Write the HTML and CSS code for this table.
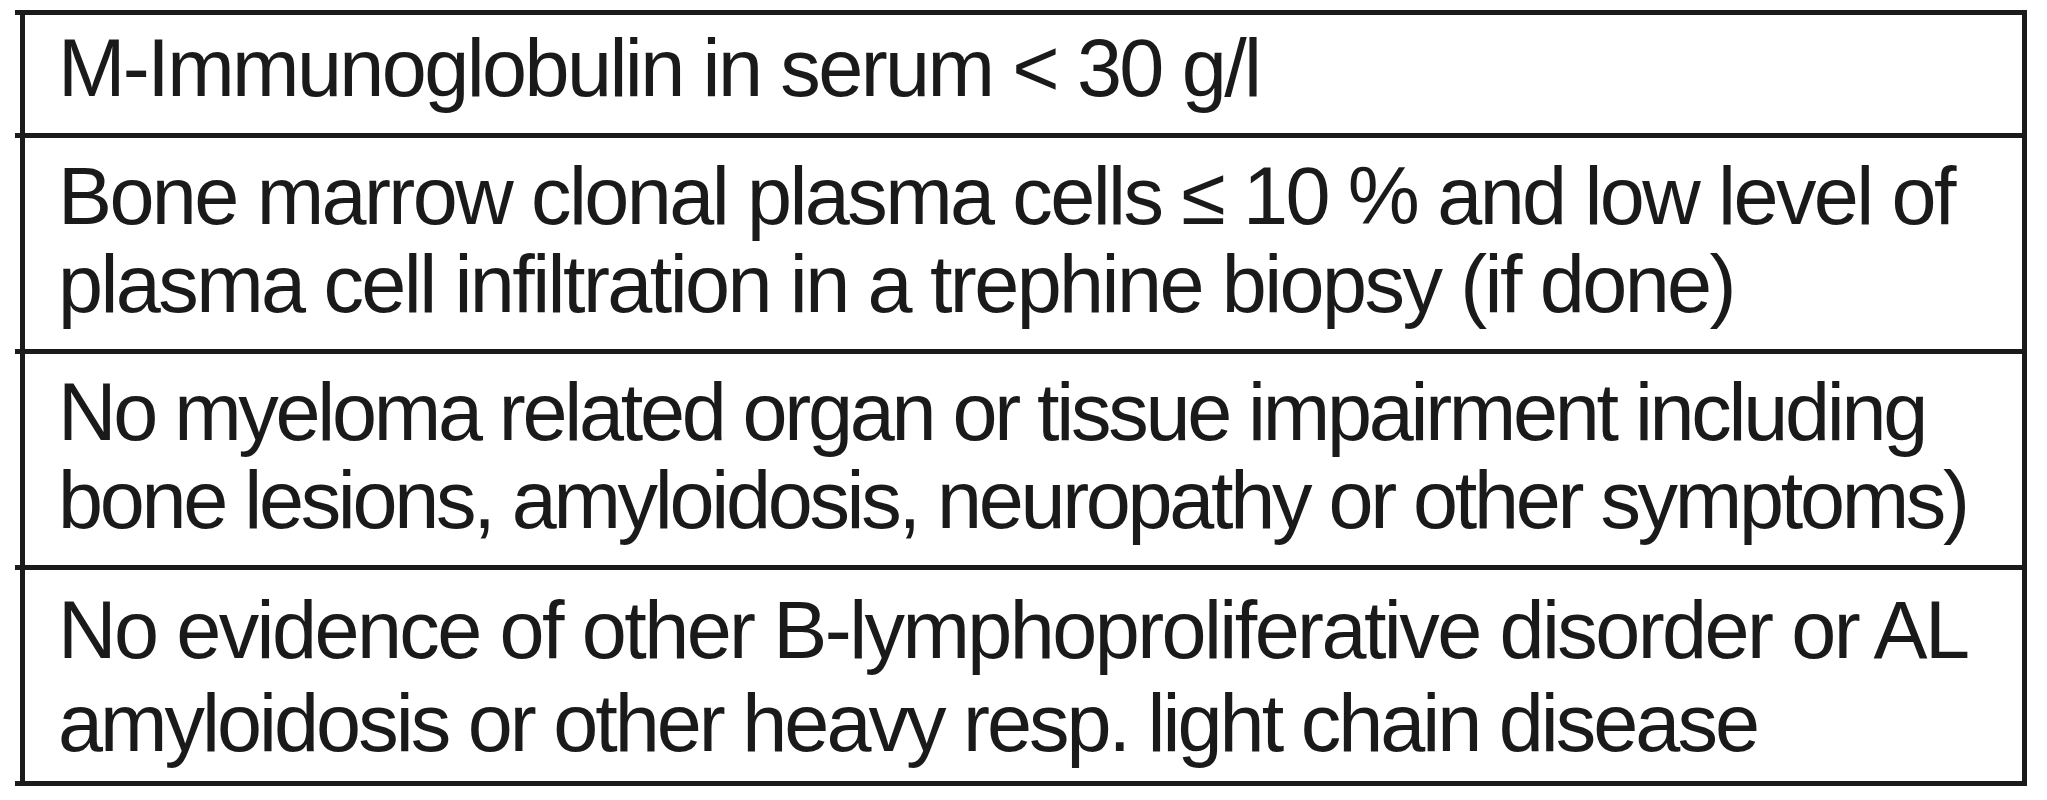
FILE: index.html
```html
<!DOCTYPE html>
<html>
<head>
<meta charset="utf-8">
<link rel="stylesheet" href="styles.css">
</head>
<body>
<div class="table">
  <div class="rule"></div>
  <div class="row row1"><p class="cell">M-Immunoglobulin in serum &lt; 30 g/l</p></div>
  <div class="rule"></div>
  <div class="row row2"><p class="cell">Bone marrow clonal plasma cells ≤ 10 % and low level of<br>plasma cell infiltration in a trephine biopsy (if done)</p></div>
  <div class="rule"></div>
  <div class="row row3"><p class="cell">No myeloma related organ or tissue impairment including<br>bone lesions, amyloidosis, neuropathy or other symptoms)</p></div>
  <div class="rule"></div>
  <div class="row row4"><p class="cell"><span class="l1">No evidence of other B-lymphoproliferative disorder or AL</span><br><span class="l2">amyloidosis or other heavy resp. light chain disease</span></p></div>
  <div class="rule"></div>
</div>
</body>
</html>
```
FILE: styles.css
```css
html, body {
  margin: 0;
  padding: 0;
  background: #ffffff;
}
body {
  width: 2047px;
  height: 800px;
  overflow: hidden;
}
.table {
  margin: 10px 0 0 15px;
  width: 2012px;
  display: flex;
  flex-direction: column;
}
.rule {
  height: 5px;
  background: #1b1b1b;
}
.row {
  margin-left: 5px;
  border-left: 5px solid #1b1b1b;
  border-right: 5px solid #1b1b1b;
  box-sizing: border-box;
  overflow: hidden;
}
.cell {
  margin: 0;
  padding-left: 33px;
  font-family: "Liberation Sans", Arial, sans-serif;
  font-size: 81px;
  line-height: 88px;
  letter-spacing: -2.6px;
  color: #1a1a1a;
  white-space: nowrap;
}
.row1 { height: 118px; padding-top: 9px; box-sizing: border-box; }
.row2 { height: 211px; padding-top: 14px; box-sizing: border-box; }
.row3 { height: 211px; padding-top: 14px; box-sizing: border-box; }
.row4 { height: 211px; padding-top: 14px; box-sizing: border-box; }
.row3 .cell { letter-spacing: -3.3px; }
.row4 .cell { line-height: 93px; }
.row4 .l1 { letter-spacing: -2.6px; }
.row4 .l2 { letter-spacing: -3px; }
```
